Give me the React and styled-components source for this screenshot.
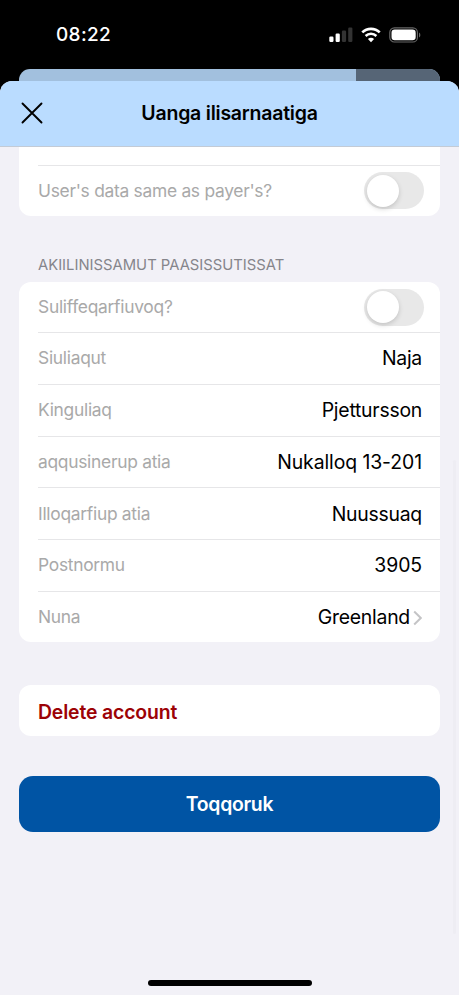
import React from 'react';
import styled, { createGlobalStyle } from 'styled-components';

const GlobalStyle = createGlobalStyle`
  * {
    box-sizing: border-box;
  }
  body {
    margin: 0;
    background: #000;
    font-family: Inter, 'Liberation Sans', sans-serif;
  }
`;

const Screen = styled.div`
  height: 995px;
  background: #000;
  display: flex;
  flex-direction: column;
  overflow: hidden;
`;

const StatusBar = styled.div`
  height: 69px;
  flex: none;
  padding: 0 38px 0 56px;
  display: flex;
  align-items: center;
  justify-content: space-between;
  color: white;
`;

const Time = styled.div`
  font-size: 19px;
  line-height: 24px;
  font-weight: 500;
  letter-spacing: 0.35px;
`;

const StatusIcons = styled.div`
  display: flex;
  align-items: center;
  gap: 8px;
  height: 18px;
`;

const BackCard = styled.div`
  height: 12px;
  flex: none;
  margin: 0 19px;
  display: flex;
  border-radius: 11px 11px 0 0;
  overflow: hidden;
  background: #a2c0de;
`;

const BackCardEnd = styled.div`
  width: 84px;
  margin-left: auto;
  background: #566576;
`;

const Sheet = styled.div`
  position: relative;
  flex: 1;
  display: flex;
  flex-direction: column;
  background: #f2f1f7;
  border-radius: 12px 12px 0 0;
  overflow: hidden;
`;

const Header = styled.div`
  height: 66px;
  flex: none;
  padding-bottom: 1px;
  display: grid;
  grid-template-columns: 64px 1fr 64px;
  align-items: center;
  background: #badcff;
  border-bottom: 1px solid #c3cbd6;
`;

const CloseButton = styled.button`
  display: flex;
  padding: 0 0 0 21px;
  border: none;
  background: none;
`;

const Title = styled.div`
  text-align: center;
  font-size: 19.5px;
  line-height: 24px;
  font-weight: 600;
  letter-spacing: -0.23px;
`;

const Body = styled.div`
  flex: 1;
  padding: 0 19px;
  display: flex;
  flex-direction: column;
`;

const Card = styled.div`
  flex: none;
  background: white;
  border-radius: ${({ $clipped }) => ($clipped ? '0 0 12px 12px' : '12px')};
`;

const Row = styled.div`
  height: ${({ $height }) => $height || 51.75}px;
  margin-left: 19px;
  padding-right: ${({ $toggle }) => ($toggle ? 16 : 18)}px;
  display: flex;
  align-items: center;
  justify-content: space-between;
  border-bottom: ${({ $last }) => ($last ? 'none' : '1px solid #e6e6e8')};
`;

const Label = styled.div`
  color: #a9a9a9;
  font-size: 17.4px;
  line-height: 22px;
  letter-spacing: -0.28px;
`;

const Value = styled.div`
  display: flex;
  align-items: center;
  font-size: 19.4px;
  line-height: 24px;
  letter-spacing: ${({ $numeric }) => ($numeric ? -0.08 : -0.24)}px;
`;

const Toggle = styled.div`
  width: 60px;
  height: 37px;
  padding: 2.5px;
  border-radius: 19px;
  background: #e8e8e8;
`;

const Knob = styled.div`
  width: 32px;
  height: 32px;
  border-radius: 50%;
  background: white;
  box-shadow: 0 2px 5px rgba(0, 0, 0, 0.16);
`;

const SectionTitle = styled.div`
  padding: 39px 19px 7px;
  color: #85858b;
  font-size: 14.8px;
  line-height: 20px;
  letter-spacing: 0;
`;

const DeleteCard = styled(Card)`
  height: 51px;
  margin-top: 42.5px;
  padding: 4px 19px 0;
  display: flex;
  align-items: center;
  color: #9c0206;
  font-size: 19.4px;
  font-weight: 600;
  letter-spacing: -0.14px;
`;

const SaveButton = styled.button`
  height: 56px;
  flex: none;
  margin-top: 40px;
  border: none;
  border-radius: 14px;
  background: #0054a4;
  color: white;
  font-family: inherit;
  font-size: 19.4px;
  font-weight: 600;
  letter-spacing: -0.3px;
`;

const HomeIndicator = styled.div`
  width: 164px;
  height: 6px;
  margin: auto auto 9px;
  border-radius: 3px;
  background: #000;
`;

const ScrollThumb = styled.div`
  position: absolute;
  top: 379px;
  right: 3px;
  width: 3px;
  height: 474px;
  border-radius: 2px;
  background: #eeedf3;
`;

const Chevron = styled.svg`
  margin: 2px 0 0 3px;
`;

const fields = [
  { label: 'Siuliaqut', value: 'Naja' },
  { label: 'Kinguliaq', value: 'Pjettursson' },
  { label: 'aqqusinerup atia', value: 'Nukalloq 13-201', numeric: true },
  { label: 'Illoqarfiup atia', value: 'Nuussuaq' },
  { label: 'Postnormu', value: '3905', numeric: true },
];

const Signal = () => (
  <svg width="24" height="16" viewBox="0 0 24 16">
    <rect x="0.3" y="9.5" width="4.2" height="5.5" rx="1.2" fill="#fff" />
    <rect x="6.6" y="6.5" width="4.2" height="8.5" rx="1.2" fill="#fff" />
    <rect x="12.9" y="3.5" width="4.2" height="11.5" rx="1.2" fill="#333" />
    <rect x="19.2" y="0.5" width="4.2" height="14.5" rx="1.2" fill="#333" />
  </svg>
);

const Wifi = () => (
  <svg width="20" height="16" viewBox="0 0 20 16">
    <path d="M1.3 5.4a12.5 12.5 0 0 1 17.4 0" fill="none" stroke="#fff" strokeWidth="2.7" />
    <path d="M4.6 9a7.8 7.8 0 0 1 10.8 0" fill="none" stroke="#fff" strokeWidth="2.5" />
    <path d="M10 15.2L6.9 12.1a4.5 4.5 0 0 1 6.2 0z" fill="#fff" />
  </svg>
);

const Battery = () => (
  <svg width="32" height="16" viewBox="0 0 32 16">
    <rect x="0.8" y="0.8" width="27.6" height="14.2" rx="4.6" fill="none" stroke="#666" strokeWidth="1.2" />
    <rect x="2.5" y="2.5" width="24.2" height="10.8" rx="3.2" fill="#fff" />
    <path d="M30 5.5c1.8.7 1.8 4.2 0 4.9z" fill="#666" />
  </svg>
);

const App = () => {
  return (
    <>
      <GlobalStyle />
      <Screen>
        <StatusBar>
          <Time>08:22</Time>
          <StatusIcons>
            <Signal />
            <Wifi />
            <Battery />
          </StatusIcons>
        </StatusBar>
        <BackCard>
          <BackCardEnd />
        </BackCard>
        <Sheet>
          <Header>
            <CloseButton aria-label="Close">
              <svg width="22" height="22" viewBox="0 0 22 22">
                <path d="M1.5 1.5l19 19M20.5 1.5l-19 19" stroke="#000" strokeWidth="1.9" strokeLinecap="round" />
              </svg>
            </CloseButton>
            <Title>Uanga ilisarnaatiga</Title>
          </Header>
          <Body>
            <Card $clipped>
              <Row $height={18.5} />
              <Row $height={50.5} $toggle $last>
                <Label>User's data same as payer's?</Label>
                <Toggle>
                  <Knob />
                </Toggle>
              </Row>
            </Card>
            <SectionTitle>AKIILINISSAMUT PAASISSUTISSAT</SectionTitle>
            <Card>
              <Row $height={51} $toggle>
                <Label>Suliffeqarfiuvoq?</Label>
                <Toggle>
                  <Knob />
                </Toggle>
              </Row>
              {fields.map(({ label, value, numeric }) => (
                <Row key={label}>
                  <Label>{label}</Label>
                  <Value $numeric={numeric}>{value}</Value>
                </Row>
              ))}
              <Row $height={50.5} $last>
                <Label>Nuna</Label>
                <Value>
                  Greenland
                  <Chevron width="9" height="16" viewBox="0 0 9 16">
                    <path d="M1.2 1.5L7.8 8l-6.6 6.5" fill="none" stroke="#c4c4c6" strokeWidth="2" />
                  </Chevron>
                </Value>
              </Row>
            </Card>
            <DeleteCard>Delete account</DeleteCard>
            <SaveButton>Toqqoruk</SaveButton>
            <HomeIndicator />
          </Body>
          <ScrollThumb />
        </Sheet>
      </Screen>
    </>
  );
};

export default App;
